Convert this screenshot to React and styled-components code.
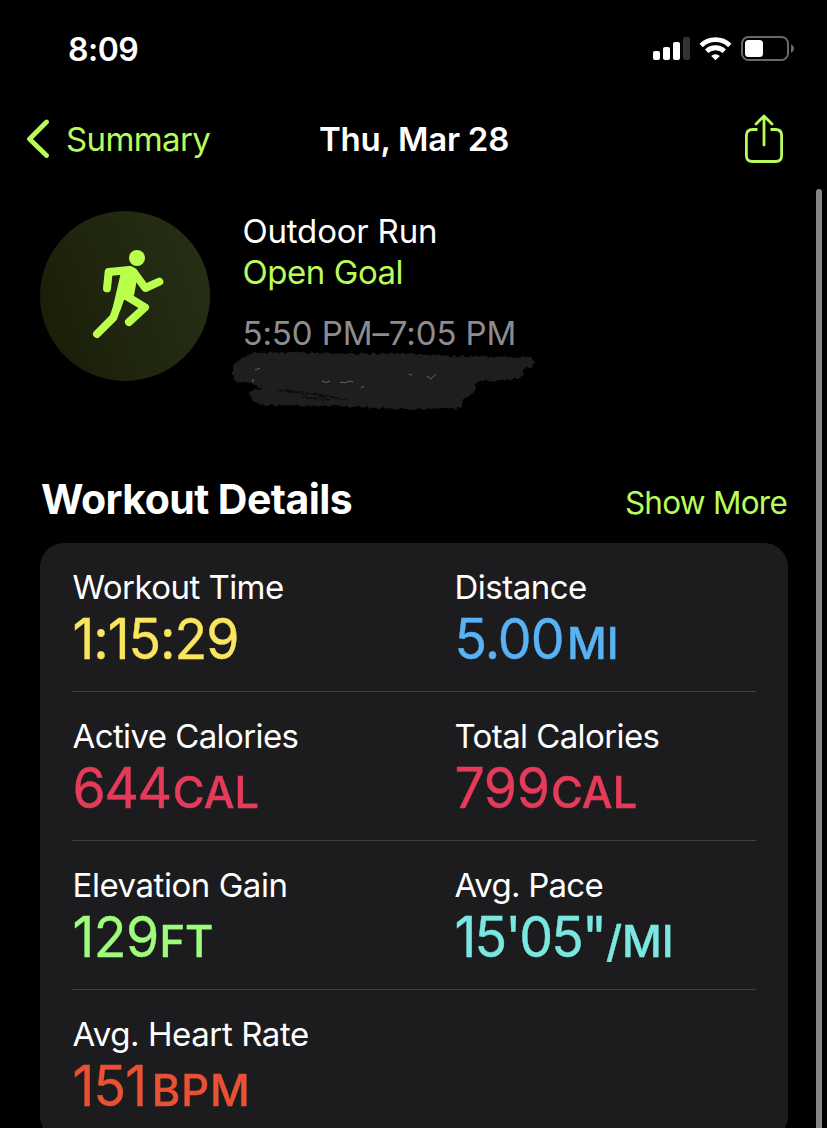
import styled, { createGlobalStyle } from 'styled-components';

const GlobalStyle = createGlobalStyle`
    * {
        box-sizing: border-box;
    }
    body {
        margin: 0;
        background: #000;
        overflow: hidden;
    }
`

const Screen = styled.div`
    position: relative;
    width: 827px;
    height: 1128px;
    overflow: hidden;
    background: #000;
    color: #fff;
    font-family: Inter, 'Liberation Sans', sans-serif;
    font-size: 33px;
`

const Text = styled.span`
    white-space: nowrap;
    letter-spacing: ${props => props.$spacing || 0}px;
`

const StatusBar = styled.div`
    display: flex;
    justify-content: space-between;
    align-items: center;
    height: 98px;
    padding: 0 32px 0 68px;
    font-size: 32px;
    font-weight: 600;
`

const NavBar = styled.div`
    display: grid;
    grid-template-columns: 1fr auto 1fr;
    align-items: center;
    height: 82px;
    padding: 0 43px 0 26px;
`

const BackButton = styled.div`
    display: flex;
    align-items: center;
    gap: 16px;
    width: 267px;
    color: #b9fb5b;
`

const NavTitle = styled.div`
    padding-left: 18px;
    font-weight: 600;
`

const ShareButton = styled.div`
    display: flex;
    justify-content: flex-end;
    padding-bottom: 1px;
    color: #b9fb5b;
`

const WorkoutHeader = styled.div`
    display: flex;
    gap: 32.5px;
    padding: 31px 40px 0;
    height: 294px;
`

const WorkoutIcon = styled.div`
    width: 170px;
    height: 170px;
    border-radius: 50%;
    background: linear-gradient(70deg, #191c08, #273117);
`

const WorkoutInfo = styled.div`
    display: flex;
    flex-direction: column;
    line-height: 41px;
`

const Goal = styled.div`
    color: #b9fb5b;
`

const Time = styled.div`
    margin-top: 20px;
    color: #8d8c91;
`

const Scribble = styled.svg`
    display: block;
    margin: -6px 0 0 -14px;
`

const SectionHeader = styled.div`
    display: flex;
    justify-content: space-between;
    align-items: baseline;
    height: 69px;
    padding: 0 40px 0 41px;
`

const SectionTitle = styled.h2`
    margin: 0;
    font-size: 41px;
    font-weight: 700;
    line-height: 51px;
`

const ShowMore = styled.div`
    font-size: 31.5px;
    color: #b9fb5b;
`

const Card = styled.div`
    width: 748px;
    height: 597px;
    margin-left: 40px;
    padding: 0 32px;
    border-radius: 24px;
    background: #1c1c1e;
`

const Row = styled.div`
    display: grid;
    grid-template-columns: 382px 302px;
    height: 149px;
    padding-top: 24px;
    border-bottom: 1px solid ${props => props.$last ? 'transparent' : '#414143'};
`

const Label = styled.div`
    padding-left: 0.5px;
    line-height: 41px;
`

const Value = styled.div`
    margin-top: 2px;
    padding-left: 0.5px;
    font-size: 56.5px;
    line-height: 58px;
    white-space: nowrap;
    color: ${props => props.$color};
    -webkit-text-stroke: 0.4px ${props => props.$color};
    transform: scaleX(0.95);
    transform-origin: left;
`

/* the unit keeps its natural width inside the narrowed value */
const Unit = styled(Text)`
    display: inline-block;
    margin-left: ${props => props.$gap}px;
    font-size: 43.5px;
    font-weight: 500;
    line-height: 1;
    transform: scaleX(1.053);
    transform-origin: left;
`

const ScrollBar = styled.div`
    position: absolute;
    top: 189px;
    right: 5px;
    width: 6px;
    height: 960px;
    border-radius: 3px;
    background: #868686;
`

const rows = [
    [
        {label: "Workout Time", labelSpacing: -0.55, value: "1:15:29", valueSpacing: -1.1, color: "#f9e55f"},
        {label: "Distance", labelSpacing: -0.5, value: "5.00", valueSpacing: -1, unit: "MI", gap: 3.4, color: "#58b2f4"},
    ],
    [
        {label: "Active Calories", labelSpacing: -0.6, value: "644", valueSpacing: -1.5, unit: "CAL", gap: 2.2, color: "#e63a5b"},
        {label: "Total Calories", labelSpacing: -0.6, value: "799", valueSpacing: -0.5, unit: "CAL", gap: 1.4, color: "#e63a5b"},
    ],
    [
        {label: "Elevation Gain", labelSpacing: -0.45, value: "129", valueSpacing: -0.6, unit: "FT", gap: 1, color: "#9ffb7b"},
        {label: "Avg. Pace", labelSpacing: -0.75, value: "15'05\"", valueSpacing: -2, unit: "/MI", gap: 1.4, color: "#7be7e1"},
    ],
    [
        {label: "Avg. Heart Rate", labelSpacing: -0.4, value: "151", valueSpacing: -0.9, unit: "BPM", gap: 5.4, unitSpacing: 0.8, color: "#ea5034"},
    ],
];

function StatusIcons(){
    return(
        <svg width="144" height="30" viewBox="651 34 144 30">
            <g fill="#fff">
                <rect x="653" y="51" width="7" height="9" rx="2"/>
                <rect x="663" y="47" width="7" height="13" rx="2"/>
                <rect x="673" y="42" width="7" height="18" rx="2"/>
                <rect x="683" y="37" width="7" height="23" rx="2" fill="#323232"/>
                <path d="M715.5 60.3l-4.300-4.300a6.400 6.400 0 0 1 8.600 0z"/>
            </g>
            <g fill="none" stroke="#fff" strokeWidth="4.8">
                <path d="M701.2 45.4a20.6 20.6 0 0 1 28.6 0"/>
                <path d="M706.7 51.3a12.7 12.7 0 0 1 17.6 0"/>
            </g>
            <rect x="742" y="37" width="46" height="23" rx="6.5" fill="none" stroke="#69696a" strokeWidth="2"/>
            <rect x="745" y="40" width="18" height="17" rx="3.5" fill="#fff"/>
            <path d="M791 44.3c4 1.6 4 6.8 0 8.4z" fill="#69696a"/>
        </svg>
    );
}

function ShareIcon(){
    return(
        <svg width="40" height="50" viewBox="0 0 40 50" fill="none" stroke="currentColor" strokeWidth="2.8" strokeLinecap="round" strokeLinejoin="round">
            <path d="M13.500 15.500H8.500Q2.400 15.500 2.400 21.500V41.500Q2.400 47.500 8.500 47.500H31.500Q37.600 47.500 37.600 41.500V21.500Q37.600 15.500 31.500 15.500H26.500" strokeLinecap="butt"/>
            <path d="M20 31V2.500M12 10l8-8 8 8"/>
        </svg>
    );
}

function Runner(){
    return(
        <svg width="170" height="170" viewBox="30 33 510 510" fill="none" stroke="#b9ff4b" strokeWidth="24" strokeLinecap="round" strokeLinejoin="round">
            <circle cx="321" cy="174" r="24" fill="#b9ff4b" stroke="none"/>
            <path d="M231 265L236 216L298 210L311 216L346 264L388 245"/>
            <path d="M201 402L250 353L276 280L345 322L297 366"/>
            <path d="M284 222L302 211L311 225L301 281L272 290L260 325Z" fill="#b9ff4b"/>
        </svg>
    );
}

function Redaction(){
    return(
        <Scribble width="308" height="64" viewBox="228 348 308 64">
            <filter id="rough" x="-5%" y="-10%" width="110%" height="120%" colorInterpolationFilters="sRGB">
                <feTurbulence type="fractalNoise" baseFrequency="0.25" numOctaves="2" seed="4"/>
                <feDisplacementMap in="SourceGraphic" scale="5" xChannelSelector="R" yChannelSelector="G"/>
            </filter>
            <g filter="url(#rough)">
                <path fill="#1e1e20" d="M252 353L290 352L340 354L405 353L450 356L528 357Q536 361 531 367L523 369Q524 377 514 379L475 382Q475 397 463 398L461 408L400 409L330 406L262 405Q248 402 249 393Q252 388 262 389L250 383L236 382Q230 378 233 363Q240 358 252 353Z"/>
                <path d="M276 390q35 3 70 10M300 397l28 3" stroke="#0c0c0d" strokeWidth="1.500" fill="none"/>
            </g>
            <path d="M252 382v-3M254 370l5-2M321 381q5 3 8 0M339 382q5 2 10-1l3 1M360 388l3-2M408 374l3 1M426 376l4 3 5-5" stroke="#666" strokeWidth="1" fill="none"/>
        </Scribble>
    );
}

function Metric(props){
    return(
        <div>
            <Label><Text $spacing={props.labelSpacing}>{props.label}</Text></Label>
            <Value $color={props.color}>
                <Text $spacing={props.valueSpacing}>{props.value}</Text>
                {props.unit && <Unit $gap={props.gap} $spacing={props.unitSpacing}>{props.unit}</Unit>}
            </Value>
        </div>
    );
}

function App(){
    return(
        <Screen>
            <GlobalStyle/>
            <StatusBar>
                <Text $spacing={-0.5}>8:09</Text>
                <StatusIcons/>
            </StatusBar>
            <NavBar>
                <BackButton>
                    <svg width="24" height="40" viewBox="0 0 24 40" fill="none" stroke="currentColor" strokeWidth="4.800" strokeLinecap="round" strokeLinejoin="round">
                        <path d="M20.500 3L3.500 20L20.500 36.500"/>
                    </svg>
                    <Text $spacing={-0.6}>Summary</Text>
                </BackButton>
                <NavTitle><Text $spacing={-0.25}>Thu, Mar 28</Text></NavTitle>
                <ShareButton><ShareIcon/></ShareButton>
            </NavBar>
            <WorkoutHeader>
                <WorkoutIcon><Runner/></WorkoutIcon>
                <WorkoutInfo>
                    <div><Text $spacing={-0.2}>Outdoor Run</Text></div>
                    <Goal><Text $spacing={-0.45}>Open Goal</Text></Goal>
                    <Time><Text $spacing={-0.1}>5:50 PM–7:05 PM</Text></Time>
                    <Redaction/>
                </WorkoutInfo>
            </WorkoutHeader>
            <SectionHeader>
                <SectionTitle><Text $spacing={-0.55}>Workout Details</Text></SectionTitle>
                <ShowMore><Text $spacing={-0.75}>Show More</Text></ShowMore>
            </SectionHeader>
            <Card>
                {rows.map((row, i) => (
                    <Row key={i} $last={i === rows.length - 1}>
                        {row.map(metric => <Metric key={metric.label} {...metric}/>)}
                    </Row>
                ))}
            </Card>
            <ScrollBar/>
        </Screen>
    );
}

export default App;
